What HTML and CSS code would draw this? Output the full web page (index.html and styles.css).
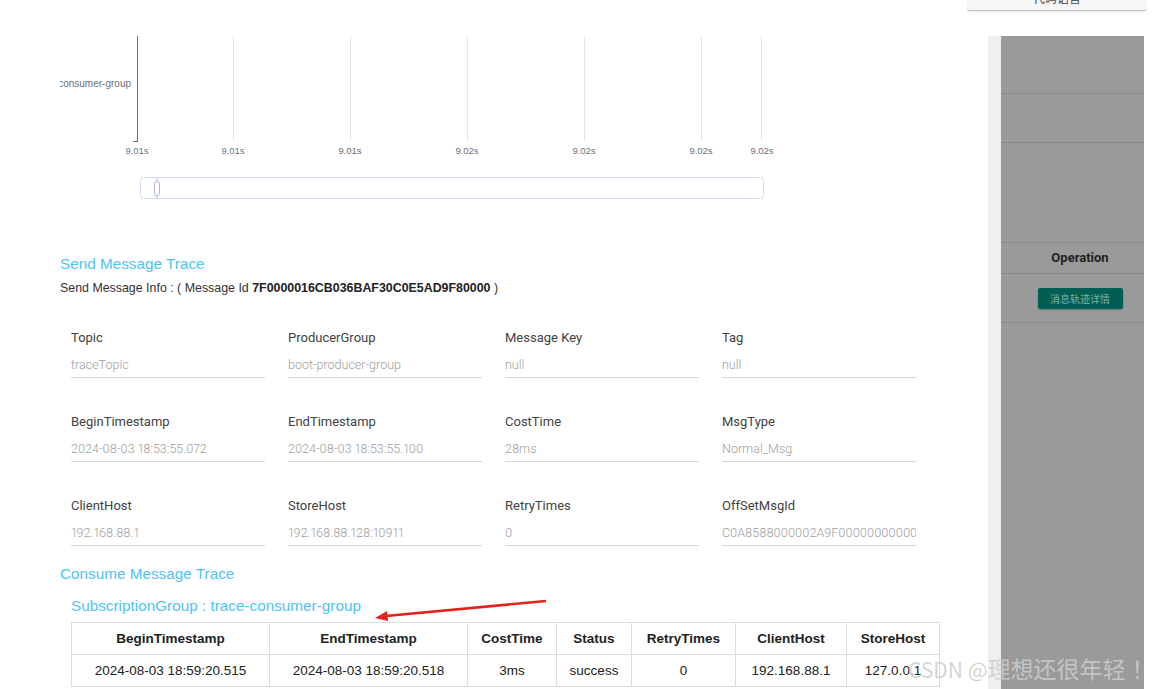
FILE: index.html
```html
<!DOCTYPE html>
<html lang="zh-CN">
<head>
<meta charset="utf-8">
<link rel="stylesheet" href="styles.css">
</head>
<body>
<div class="main">
  <svg class="chart" width="720" height="180" viewBox="0 0 720 180">
    <g class="grid">
      <line x1="173.5" y1="6" x2="173.5" y2="111"/>
      <line x1="290.5" y1="6" x2="290.5" y2="111"/>
      <line x1="407.5" y1="6" x2="407.5" y2="111"/>
      <line x1="524.5" y1="6" x2="524.5" y2="111"/>
      <line x1="641.5" y1="6" x2="641.5" y2="111"/>
      <line x1="701.5" y1="6" x2="701.5" y2="111"/>
    </g>
    <line class="axis" x1="77.5" y1="6" x2="77.5" y2="111.5"/>
    <line class="axis" x1="73" y1="111.5" x2="78" y2="111.5"/>
    <text class="ylab" x="71" y="56.5" text-anchor="end">consumer-group</text>
    <g class="xlab" text-anchor="middle">
      <text x="77" y="124">9.01s</text>
      <text x="173" y="124">9.01s</text>
      <text x="290" y="124">9.01s</text>
      <text x="407" y="124">9.02s</text>
      <text x="524" y="124">9.02s</text>
      <text x="641" y="124">9.02s</text>
      <text x="702" y="124">9.02s</text>
    </g>
    <rect class="slider" x="80.5" y="147.5" width="623" height="21" rx="3"/>
    <line class="handle-line" x1="97" y1="148" x2="97" y2="168"/>
    <rect class="handle" x="94.5" y="151.5" width="5" height="14" rx="2"/>
  </svg>

  <h2 class="trace-title send-title">Send Message Trace</h2>
  <p class="info">Send Message Info : ( Message Id <b>7F0000016CB036BAF30C0E5AD9F80000</b> )</p>

  <div class="fields">
    <div class="field"><div class="label">Topic</div><div class="value">traceTopic</div></div>
    <div class="field"><div class="label">ProducerGroup</div><div class="value">boot-producer-group</div></div>
    <div class="field"><div class="label">Message Key</div><div class="value">null</div></div>
    <div class="field"><div class="label">Tag</div><div class="value">null</div></div>
    <div class="field"><div class="label">BeginTimestamp</div><div class="value">2024-08-03 18:53:55.072</div></div>
    <div class="field"><div class="label">EndTimestamp</div><div class="value">2024-08-03 18:53:55.100</div></div>
    <div class="field"><div class="label">CostTime</div><div class="value">28ms</div></div>
    <div class="field"><div class="label">MsgType</div><div class="value">Normal_Msg</div></div>
    <div class="field"><div class="label">ClientHost</div><div class="value">192.168.88.1</div></div>
    <div class="field"><div class="label">StoreHost</div><div class="value">192.168.88.128:10911</div></div>
    <div class="field"><div class="label">RetryTimes</div><div class="value">0</div></div>
    <div class="field"><div class="label">OffSetMsgId</div><div class="value">C0A8588000002A9F0000000000031E1A</div></div>
  </div>

  <h2 class="trace-title consume-title">Consume Message Trace</h2>
  <h3 class="sub-title">SubscriptionGroup : trace-consumer-group</h3>
  <table class="ctable">
    <colgroup>
      <col class="c1"><col class="c2"><col class="c3"><col class="c4"><col class="c5"><col class="c6"><col class="c7">
    </colgroup>
    <tr>
      <th>BeginTimestamp</th><th>EndTimestamp</th><th>CostTime</th><th>Status</th><th>RetryTimes</th><th>ClientHost</th><th>StoreHost</th>
    </tr>
    <tr>
      <td>2024-08-03 18:59:20.515</td><td>2024-08-03 18:59:20.518</td><td>3ms</td><td>success</td><td>0</td><td>192.168.88.1</td><td>127.0.0.1</td>
    </tr>
  </table>
</div>

<div class="side">
  <div class="topbtn"><span>代码语言</span></div>
  <div class="panel">
    <div class="strip"></div>
    <div class="rows">
      <div class="row r1"></div>
      <div class="row r2"></div>
      <div class="row r3"></div>
      <div class="row r4">Operation</div>
      <div class="row r5"><span class="dbtn">消息轨迹详情</span></div>
      <div class="row r6"></div>
    </div>
  </div>
</div>

<svg class="arrow" width="180" height="30" viewBox="0 0 180 30">
  <line x1="176" y1="5" x2="16" y2="20" />
  <polygon points="5,22 17,15 18,25" />
</svg>
<div class="watermark"><span class="wm-latin">CSDN @</span><span class="wm-cjk">理想还很年轻</span><span class="wm-cjk wm-bang">！</span></div>
</body>
</html>
```

FILE: styles.css
```css
html, body {
  margin: 0;
  padding: 0;
  width: 1153px;
  height: 689px;
  overflow: hidden;
  background: #fff;
}
body {
  display: flex;
  position: relative;
  font-family: "Liberation Sans", Arial, sans-serif;
  color: #333;
}
.main {
  width: 907px;
  flex: none;
  padding-left: 60px;
  display: flex;
  flex-direction: column;
  align-items: flex-start;
}
.chart {
  display: block;
  margin-top: 30px;
  font-family: "Liberation Sans", Arial, sans-serif;
}
.grid line { stroke: #e0e6f1; stroke-width: 1; }
.axis { stroke: #6e7079; stroke-width: 1; }
.ylab { font-size: 10px; fill: #6e7079; }
.xlab text { font-size: 9.5px; fill: #6e7079; }
.slider { fill: none; stroke: #d2dbee; stroke-width: 1; }
.handle-line { stroke: #d2dbee; stroke-width: 2; }
.handle { fill: #fff; stroke: #acb8d1; stroke-width: 1; }

.trace-title {
  margin: 0;
  font-weight: normal;
  font-size: 15.3px;
  line-height: 20px;
  color: #4fc3f7;
}
.send-title { margin-top: 44px; }
.info {
  margin: 6px 0 0;
  font-size: 12.4px;
  line-height: 16px;
  color: #333;
}
.info b { color: #222; }

.fields {
  margin: 32px 0 0 11px;
  display: grid;
  grid-template-columns: repeat(4, 194px);
  column-gap: 23px;
  row-gap: 34px;
  font-family: Roboto, "Liberation Sans", sans-serif;
}
.label {
  font-size: 13px;
  line-height: 18px;
  padding-top: 1px;
  color: #424242;
}
.value {
  margin-top: 4px;
  height: 24px;
  padding-top: 2px;
  line-height: 23px;
  font-family: Roboto, sans-serif;
  font-size: 12.5px;
  font-weight: 300;
  font-feature-settings: "pnum" 1;
  font-variant-numeric: proportional-nums;
  color: #9e9e9e;
  border-bottom: 1px solid #d6d6d6;
  white-space: nowrap;
  overflow: hidden;
}
.consume-title { margin-top: 18px; }
.sub-title {
  margin: 12px 0 0 11px;
  font-weight: normal;
  font-size: 15.3px;
  line-height: 20px;
  color: #4fc3f7;
}
.ctable {
  margin: 6px 0 0 11px;
  border-collapse: collapse;
  table-layout: fixed;
  width: 869px;
  font-size: 13.5px;
  color: #222;
}
.c1, .c2 { width: 198px; }
.c3 { width: 89px; }
.c4 { width: 75px; }
.c5 { width: 104px; }
.c6 { width: 111px; }
.c7 { width: 93px; }
.ctable tr { height: 32px; }
.ctable th, .ctable td {
  border: 1px solid #ddd;
  padding: 0;
  text-align: center;
  white-space: nowrap;
  overflow: hidden;
}
.ctable th { font-weight: bold; }

.side {
  width: 186px;
  flex: none;
  display: flex;
  flex-direction: column;
}
.topbtn {
  width: 180px;
  height: 10px;
  overflow: hidden;
  background: #f6f6f6;
  border-bottom: 1px solid #b8c4c8;
  border-radius: 0 0 3px 3px;
  box-shadow: 0 1px 1px rgba(0,0,0,0.08);
  text-align: center;
  font-family: "Noto Sans CJK SC", sans-serif;
  font-size: 12px;
  color: #444;
}
.topbtn span {
  display: block;
  line-height: 20px;
  margin-top: -12px;
}
.panel {
  margin-top: 25px;
  margin-left: 21px;
  width: 156px;
  flex: 1;
  display: flex;
}
.strip {
  width: 13px;
  background: #efefef;
}
.rows {
  flex: 1;
  background: #9a9a9a;
  display: flex;
  flex-direction: column;
}
.row { border-bottom: 1px solid #888; box-sizing: border-box; }
.r1 { height: 58px; }
.r2 { height: 49px; }
.r3 { height: 100px; }
.r4 {
  height: 31px;
  line-height: 30px;
  padding-left: 15px;
  text-align: center;
  font-weight: bold;
  font-size: 13px;
  color: #222;
  font-family: Roboto, "Liberation Sans", sans-serif;
}
.r5 {
  height: 49px;
  display: flex;
  justify-content: center;
  padding-top: 14px;
  padding-left: 15px;
}
.r6 { flex: 1; border-bottom: none; }
.dbtn {
  display: block;
  width: 85px;
  height: 21px;
  line-height: 21px;
  background: #005f52;
  border-radius: 2px;
  text-align: center;
  font-family: "Noto Sans CJK SC", sans-serif;
  font-size: 10px;
  color: #7fb0a8;
  box-shadow: 0 1px 2px rgba(0,0,0,0.25);
}

.arrow {
  position: absolute;
  left: 370px;
  top: 596px;
}
.arrow line { stroke: #e5211c; stroke-width: 2.5; }
.arrow polygon { fill: #e5211c; }

.watermark {
  position: absolute;
  left: 908px;
  top: 653px;
  font-family: "Noto Sans CJK SC", sans-serif;
  line-height: 30px;
  color: rgba(205, 205, 205, 0.85);
  white-space: nowrap;
}
.wm-latin { font-size: 21px; }
.wm-cjk { font-size: 23px; }
.wm-bang { margin-left: 6px; }
```
